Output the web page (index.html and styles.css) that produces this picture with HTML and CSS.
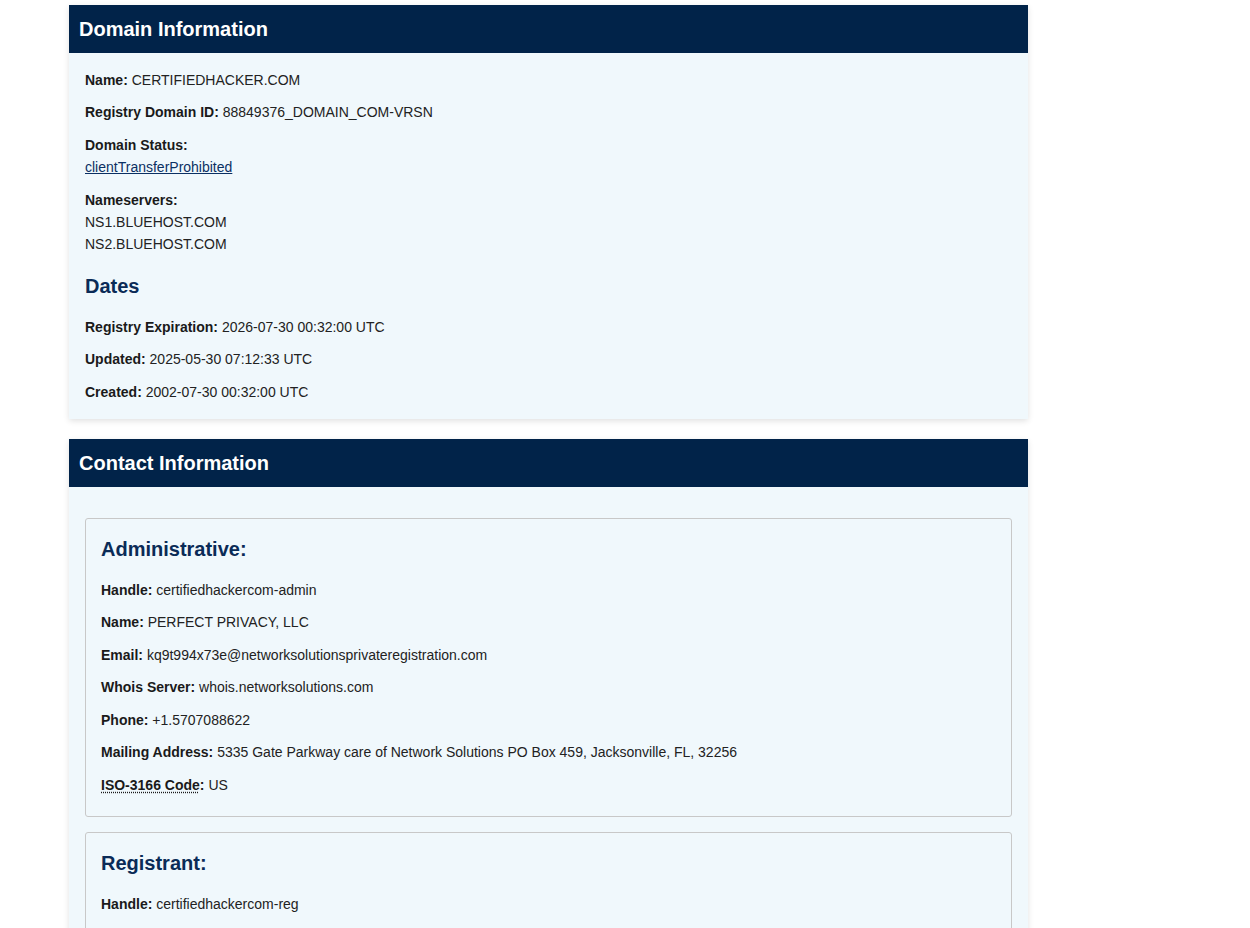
FILE: index.html
```html
<!DOCTYPE html>
<html lang="en">
<head>
<meta charset="utf-8">
<title>Domain Information</title>
<link rel="stylesheet" href="styles.css">
</head>
<body>
<main class="page">
  <section class="card">
    <h2 class="card-title">Domain Information</h2>
    <div class="card-body">
      <p class="field"><strong>Name:</strong> CERTIFIEDHACKER.COM</p>
      <p class="field"><strong>Registry Domain ID:</strong> 88849376_DOMAIN_COM-VRSN</p>
      <div class="field">
        <strong>Domain Status:</strong><br>
        <a href="#" class="status-link">clientTransferProhibited</a>
      </div>
      <div class="field">
        <strong>Nameservers:</strong><br>
        NS1.BLUEHOST.COM<br>
        NS2.BLUEHOST.COM
      </div>
      <h3 class="sub-title">Dates</h3>
      <p class="field"><strong>Registry Expiration:</strong> 2026-07-30 00:32:00 UTC</p>
      <p class="field"><strong>Updated:</strong> 2025-05-30 07:12:33 UTC</p>
      <p class="field"><strong>Created:</strong> 2002-07-30 00:32:00 UTC</p>
    </div>
  </section>

  <section class="card">
    <h2 class="card-title">Contact Information</h2>
    <div class="card-body">
      <div class="contact">
        <h3 class="sub-title">Administrative:</h3>
        <p class="field"><strong>Handle:</strong> certifiedhackercom-admin</p>
        <p class="field"><strong>Name:</strong> PERFECT PRIVACY, LLC</p>
        <p class="field"><strong>Email:</strong> kq9t994x73e@networksolutionsprivateregistration.com</p>
        <p class="field"><strong>Whois Server:</strong> whois.networksolutions.com</p>
        <p class="field"><strong>Phone:</strong> +1.5707088622</p>
        <p class="field"><strong>Mailing Address:</strong> 5335 Gate Parkway care of Network Solutions PO Box 459, Jacksonville, FL, 32256</p>
        <p class="field"><strong><abbr title="ISO 3166 country code">ISO-3166 Code</abbr>:</strong> US</p>
      </div>
      <div class="contact">
        <h3 class="sub-title">Registrant:</h3>
        <p class="field"><strong>Handle:</strong> certifiedhackercom-reg</p>
        <p class="field"><strong>Name:</strong> PERFECT PRIVACY, LLC</p>
        <p class="field"><strong>Email:</strong> kq9t994x73e@networksolutionsprivateregistration.com</p>
        <p class="field"><strong>Whois Server:</strong> whois.networksolutions.com</p>
        <p class="field"><strong>Phone:</strong> +1.5707088622</p>
      </div>
    </div>
  </section>
</main>
</body>
</html>
```

FILE: styles.css
```css
html, body {
  margin: 0;
  padding: 0;
  background: #ffffff;
}

body {
  font-family: "Liberation Sans", Arial, sans-serif;
  font-size: 14px;
  color: #222222;
}

.page {
  width: 959px;
  margin-left: 69px;
  padding-top: 5px;
}

.card {
  background: #f0f8fc;
  box-shadow: 0 2px 6px rgba(0, 0, 0, 0.12);
  margin-bottom: 20px;
}

.card-title {
  margin: 0;
  background: #012349;
  color: #ffffff;
  font-size: 20px;
  font-weight: bold;
  line-height: 24px;
  padding: 12px 10px;
}

.card-body {
  padding: 16px;
}

.field {
  margin: 0 0 10px;
  line-height: 22.4px;
}

.field:last-child {
  margin-bottom: 0;
}

.field strong {
  font-weight: bold;
  color: #1a1a1a;
}

.status-link {
  color: #0b3063;
  text-decoration: underline;
}

abbr {
  text-decoration: underline dotted;
  text-underline-offset: 2px;
}

.sub-title {
  margin: 18px 0;
  font-size: 20px;
  line-height: 24px;
  font-weight: bold;
  color: #0a2b57;
}

.contact {
  border: 1px solid #c8c8c8;
  border-radius: 3px;
  padding: 18px 15px 20px;
  margin: 15px 0;
}

.contact .sub-title {
  margin-top: 0;
}
```
